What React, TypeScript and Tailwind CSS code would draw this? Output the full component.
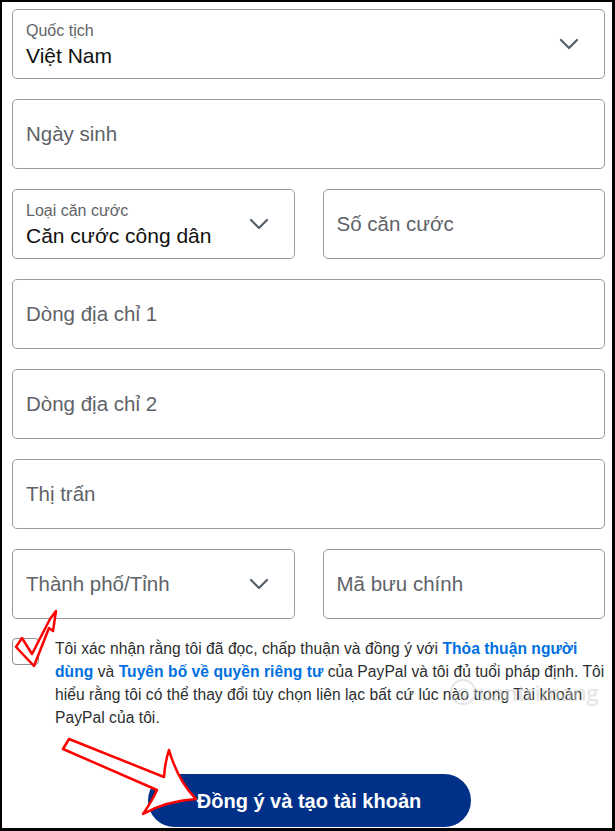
import { ReactNode } from "react";

const FONT = { fontFamily: '"Liberation Sans", Arial, sans-serif' };

function Chevron() {
  return (
    <svg width="20" height="12" viewBox="0 0 20 12" className="shrink-0">
      <path d="M2 2 L10 10 L18 2" fill="none" stroke="#545d68" strokeWidth="2.2" strokeLinecap="round" strokeLinejoin="round" />
    </svg>
  );
}

function Box({ children }: { children: ReactNode }) {
  return (
    <div className="flex h-[70px] items-center justify-between rounded-[5px] border border-[#9b9b9b] bg-white pl-[13px] pr-[25px]">
      {children}
    </div>
  );
}

function Input({ placeholder }: { placeholder: string }) {
  return (
    <Box>
      <span className="text-[20.5px] text-[#5f6368]">{placeholder}</span>
    </Box>
  );
}

function Select({ label, value, placeholder }: { label?: string; value?: string; placeholder?: string }) {
  return (
    <Box>
      {label ? (
        <div className="flex flex-col pt-[1px]">
          <span className="text-[16px] leading-[19px] text-[#5f6368]">{label}</span>
          <span className="mt-[3px] text-[21px] leading-[25px] text-[#111]">{value}</span>
        </div>
      ) : (
        <span className="text-[20.5px] text-[#5f6368]">{placeholder}</span>
      )}
      <Chevron />
    </Box>
  );
}

function Link({ children }: { children: ReactNode }) {
  return <a className="font-bold text-[#0070e0]">{children}</a>;
}

export default function App() {
  return (
    <div
      className="relative h-[831px] w-[615px] overflow-hidden border-t-2 border-b-[3px] border-l-2 border-r-[3px] border-black bg-white"
      style={FONT}
    >
      <div className="flex flex-col gap-5 pl-[10px] pr-[7px] pt-[7px]">
        <Select label="Quốc tịch" value="Việt Nam" />
        <Input placeholder="Ngày sinh" />
        <div className="grid grid-cols-2 gap-[28px]">
          <Select label="Loại căn cước" value="Căn cước công dân" />
          <Input placeholder="Số căn cước" />
        </div>
        <Input placeholder="Dòng địa chỉ 1" />
        <Input placeholder="Dòng địa chỉ 2" />
        <Input placeholder="Thị trấn" />
        <div className="grid grid-cols-2 gap-[28px]">
          <Select placeholder="Thành phố/Tỉnh" />
          <Input placeholder="Mã bưu chính" />
        </div>
      </div>

      <div className="mt-[18px] flex gap-4 pl-[10px] pr-[4px]">
        <div className="mt-[1px] h-[27px] w-[27px] shrink-0 rounded-[4px] border border-[#8f8f8f] bg-white" />
        <p className="whitespace-nowrap text-[15.6px] leading-[23px] tracking-[0.05px] text-[#2c2e2f]">
          Tôi xác nhận rằng tôi đã đọc, chấp thuận và đồng ý với <Link>Thỏa thuận người</Link>
          <br />
          <Link>dùng</Link> và <Link>Tuyên bố về quyền riêng tư</Link> của PayPal và tôi đủ tuổi pháp định. Tôi
          <br />
          hiểu rằng tôi có thể thay đổi tùy chọn liên lạc bất cứ lúc nào trong Tài khoản
          <br />
          PayPal của tôi.
        </p>
      </div>

      <div className="mt-[45px] flex justify-center pl-[4px]">
        <button className="flex h-[53px] w-[323px] items-center justify-center rounded-full bg-[#003087] text-[20px] font-bold text-white">
          Đồng ý và tạo tài khoản
        </button>
      </div>

      {/* watermark */}
      <div className="pointer-events-none absolute left-[448px] top-[676px] flex items-center gap-[2px] text-[#cfcfcf] opacity-50" style={{ fontFamily: '"Open Sans", sans-serif' }}>
        <span className="flex h-[26px] w-[26px] items-center justify-center rounded-full border-2 border-[#cfcfcf] text-[15px] font-bold">Q</span>
        <span className="text-[22px] font-semibold leading-[28px] tracking-[-0.5px]">uantrimang</span>
      </div>

      {/* red annotations */}
      <svg className="pointer-events-none absolute left-0 top-0" width="615" height="831" viewBox="-2 -2 615 831">
        <path
          d="M52 607 L49 627 L45 624 L30 662 L12 643 L18 634 L28 650 L46 615 Z"
          fill="white"
          stroke="#ff0000"
          strokeWidth="2.5"
          strokeLinejoin="round"
        />
        <path
          d="M65 735 L160 773 Q161 758 165 746 Q174 777 192 795 Q162 797 139 810 Q148 797 153 786 L59 745 Z"
          fill="white"
          stroke="#ff0000"
          strokeWidth="2.5"
          strokeLinejoin="round"
        />
      </svg>
    </div>
  );
}
